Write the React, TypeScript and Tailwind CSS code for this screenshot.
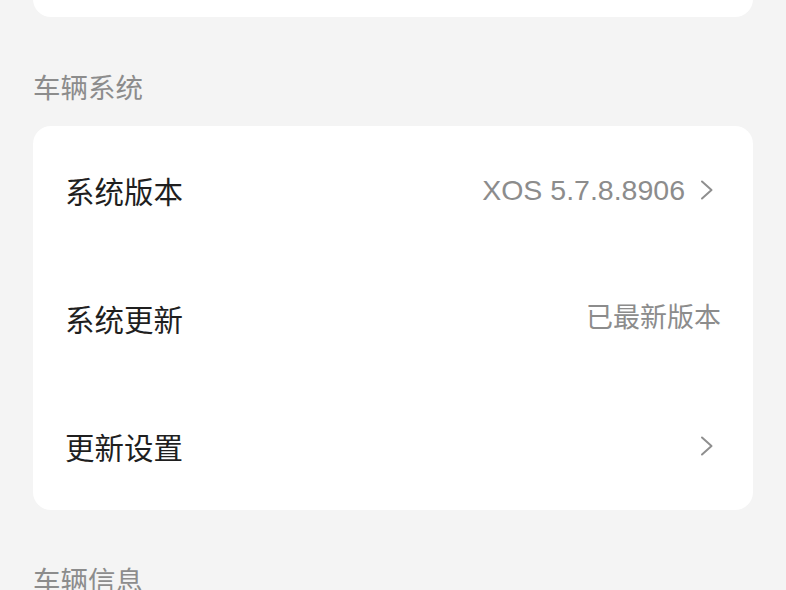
const font = { fontFamily: '"Noto Sans CJK SC", "Liberation Sans", sans-serif' };
const latin = { fontFamily: '"Liberation Sans", "Noto Sans CJK SC", sans-serif' };

function Chevron() {
  return (
    <svg width="22" height="22" viewBox="0 0 22 22" className="shrink-0">
      <path d="M3 2.5 L12.5 11 L3 19.5" fill="none" stroke="#8f8f8f" strokeWidth="2" strokeLinecap="round" strokeLinejoin="round" />
    </svg>
  );
}

type Row = { label: string; value?: string; arrow?: boolean };

const rows: Row[] = [
  { label: '系统版本', value: 'XOS 5.7.8.8906', arrow: true },
  { label: '系统更新', value: '已最新版本' },
  { label: '更新设置', arrow: true },
];

export default function App() {
  return (
    <div className="w-[786px] h-[590px] overflow-hidden bg-[#f4f4f4] px-[33px]" style={font}>
      <div className="-mt-[40px] h-[57px] rounded-[18px] bg-white" />
      <div className="pt-[49px] pb-[20px] text-[27.5px] leading-[40px] text-[#8c8c8c]">车辆系统</div>
      <div className="rounded-[18px] bg-white">
        {rows.map(r => (
          <div key={r.label} className="flex h-[128px] items-center justify-between pl-[32px] pr-[32px]">
            <span className="text-[29.5px] text-[#1f1f1f]">{r.label}</span>
            <div className="flex items-center gap-[14px]">
              {r.value && (
                <span
                  className={r.arrow ? 'text-[28.5px] text-[#8c8c8c]' : 'text-[27px] text-[#8c8c8c]'}
                  style={latin}
                >
                  {r.value}
                </span>
              )}
              {r.arrow && <Chevron />}
            </div>
          </div>
        ))}
      </div>
      <div className="pt-[49px] text-[27.5px] leading-[40px] text-[#8c8c8c]">车辆信息</div>
    </div>
  );
}
